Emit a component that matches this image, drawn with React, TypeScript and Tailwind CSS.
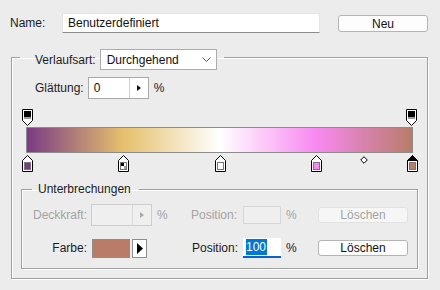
import React from "react";

const FONT = { fontFamily: '"Liberation Sans", Arial, sans-serif' };

function BottomStop({ color, selected, icon }: { color?: string; selected?: boolean; icon?: boolean }) {
  return (
    <svg width="11" height="17" viewBox="0 0 11 17" shapeRendering="crispEdges">
      <path d="M5.5 0.5 L10.5 5.5 L10.5 16.5 L0.5 16.5 L0.5 5.5 Z" fill="#fff" stroke="#000" strokeWidth="1" shapeRendering="geometricPrecision" />
      {selected && <path d="M5.5 0.5 L10.5 5.5 L0.5 5.5 Z" fill="#000" stroke="#000" strokeWidth="1" shapeRendering="geometricPrecision" />}
      {icon ? (
        <>
          <rect x="2.5" y="7.5" width="6" height="7" fill="#fff" stroke="#777" />
          <rect x="3" y="8" width="3" height="3" fill="#000" />
          <rect x="6" y="11" width="2" height="3" fill="#a0a0a0" />
          <rect x="3" y="11" width="3" height="3" fill="#fff" />
        </>
      ) : (
        <rect x="2.5" y="7.5" width="6" height="7" fill={color} stroke="#777" />
      )}
    </svg>
  );
}

function TopStop() {
  return (
    <svg width="11" height="17" viewBox="0 0 11 17" shapeRendering="crispEdges">
      <path d="M0.5 0.5 H10.5 V11.5 L5.5 16.5 L0.5 11.5 Z" fill="#fff" stroke="#000" strokeWidth="1" shapeRendering="geometricPrecision" />
      <rect x="2" y="2" width="7" height="6" fill="#000" />
      <rect x="2" y="8" width="7" height="2" fill="#9a9a9a" />
    </svg>
  );
}

const bottomStops = [
  { p: 0, color: "#7b3a84" },
  { p: 25, icon: true },
  { p: 50, color: "#ffffff" },
  { p: 75, color: "#f989f2" },
  { p: 100, color: "#b87c69", selected: true },
];

export default function App() {
  const label = "text-[#1a1a26]";
  const dis = "text-[#a3a3a3]";
  return (
    <div className="w-[440px] h-[290px] bg-[#ececec] pt-[13px] text-[12px] leading-[14px] overflow-hidden" style={FONT}>
      {/* Name row */}
      <div className="flex items-center h-[20px]">
        <span className={`w-[62px] pl-[10px] ${label}`}>Name:</span>
        <div className="w-[258px] h-[20px] bg-white border border-[#e4e4e4] border-b-[#8c8c8c] flex items-center pl-[5px] text-[#111]">
          Benutzerdefiniert
        </div>
        <button className="ml-[18px] w-[90px] h-[17px] bg-[#fdfdfd] border border-[#b4b4b4] rounded-[3px] text-[#111] flex items-center justify-center pt-[1px]">
          Neu
        </button>
      </div>

      {/* Outer group */}
      <fieldset className="mt-[12px] ml-[11px] w-[417px] h-[234px] border border-[#a0a0a0] shadow-[inset_1px_1px_0_#fff,1px_1px_0_#fff]">
        <legend className="ml-[8px] pl-[15px] pr-[7px] pt-[4px] flex items-center">
          <span className={label}>Verlaufsart:</span>
          <div className="ml-[4px] w-[117px] h-[21px] bg-white border border-[#acacac] flex items-center justify-between pl-[6px] pr-[5px] text-[#111]">
            <span>Durchgehend</span>
            <svg width="9" height="5" viewBox="0 0 9 5">
              <path d="M0.5 0.5 L4.5 4.5 L8.5 0.5" fill="none" stroke="#555" strokeWidth="1" />
            </svg>
          </div>
        </legend>

        {/* Glättung */}
        <div className="mt-[7px] flex items-center h-[22px] pl-[23px]">
          <span className={label}>Glättung:</span>
          <div className="ml-[4px] w-[61px] h-[22px] bg-white border border-[#a9a9a9] flex">
            <div className="w-[40px] flex items-center pl-[5px] text-[#111]">0</div>
            <div className="flex-1 border-l border-[#d0d0d0] flex items-center justify-center">
              <svg width="4" height="6" viewBox="0 0 4 6"><path d="M0 0 L4 3 L0 6 Z" fill="#111" /></svg>
            </div>
          </div>
          <span className={`ml-[5px] ${label}`}>%</span>
        </div>

        {/* Gradient editor */}
        <div className="relative mt-[10px] ml-[10px] w-[396px] h-[63px]">
          <div className="absolute left-[0px] top-0"><TopStop /></div>
          <div className="absolute left-[384px] top-0"><TopStop /></div>
          <div
            className="absolute left-[4px] top-[18px] w-[387px] h-[26px] border border-[#8c8c8c]"
            style={{ background: "linear-gradient(to right, #7b3a84 0%, #e6c06c 25%, #ffffff 50%, #f989f2 75%, #b87c69 100%)" }}
          />
          {bottomStops.map((s, i) => (
            <div key={i} className="absolute top-[46px]" style={{ left: Math.round(s.p * 3.85) }}>
              <BottomStop color={s.color} selected={s.selected} icon={s.icon} />
            </div>
          ))}
          <div className="absolute left-[338px] top-[47px]">
            <svg width="8" height="8" viewBox="0 0 8 8">
              <path d="M4 0.7 L7.3 4 L4 7.3 L0.7 4 Z" fill="#fff" stroke="#000" strokeWidth="1" />
            </svg>
          </div>
        </div>

        {/* Unterbrechungen */}
        <fieldset className="mt-[9px] ml-[9px] w-[397px] h-[88px] border border-[#a0a0a0] shadow-[inset_1px_1px_0_#fff,1px_1px_0_#fff]">
          <legend className={`ml-[10px] pl-[6px] pr-[8px] leading-[16px] ${label}`}>Unterbrechungen</legend>

          <div className="mt-[7px] flex items-center h-[22px]">
            <span className={`w-[65px] text-right ${dis}`}>Deckkraft:</span>
            <div className="ml-[4px] w-[61px] h-[22px] bg-[#efefef] border border-[#cccccc] flex">
              <div className="w-[40px]" />
              <div className="flex-1 border-l border-[#d8d8d8] flex items-center justify-center">
                <svg width="4" height="6" viewBox="0 0 4 6"><path d="M0 0 L4 3 L0 6 Z" fill="#a8a8a8" /></svg>
              </div>
            </div>
            <span className={`ml-[5px] w-[34px] ${dis}`}>%</span>
            <span className={`w-[52px] ${dis}`}>Position:</span>
            <div className="w-[38px] h-[18px] border border-[#d6d6d6] bg-[#efefef]" />
            <span className={`ml-[5px] w-[32px] ${dis}`}>%</span>
            <button className={`w-[90px] h-[16px] bg-[#f6f6f6] border border-[#e2e2e2] rounded-[3px] flex items-center justify-center ${dis}`}>
              Löschen
            </button>
          </div>

          <div className="mt-[12px] flex items-center h-[20px]">
            <span className={`w-[65px] text-right ${label}`}>Farbe:</span>
            <div className="ml-[5px] w-[38px] h-[19px] bg-[#b87c69] border border-[#8e8e8e]" />
            <div className="ml-[2px] w-[15px] h-[19px] bg-white border border-[#8e8e8e] flex items-center justify-center">
              <svg width="6" height="11" viewBox="0 0 6 11"><path d="M0 0 L6 5.5 L0 11 Z" fill="#000" /></svg>
            </div>
            <span className={`ml-[45px] w-[51px] ${label}`}>Position:</span>
            <div className="w-[38px] h-[20px] bg-white border-b-2 border-[#0a64c8] flex items-center pl-[3px]">
              <span className="bg-[#0078d7] text-white leading-[16px] pr-[1px]">100</span>
            </div>
            <span className={`ml-[5px] w-[32px] ${label}`}>%</span>
            <button className="w-[90px] h-[16px] bg-[#fdfdfd] border border-[#b4b4b4] rounded-[3px] flex items-center justify-center text-[#111]">
              Löschen
            </button>
          </div>
        </fieldset>
      </fieldset>
    </div>
  );
}
